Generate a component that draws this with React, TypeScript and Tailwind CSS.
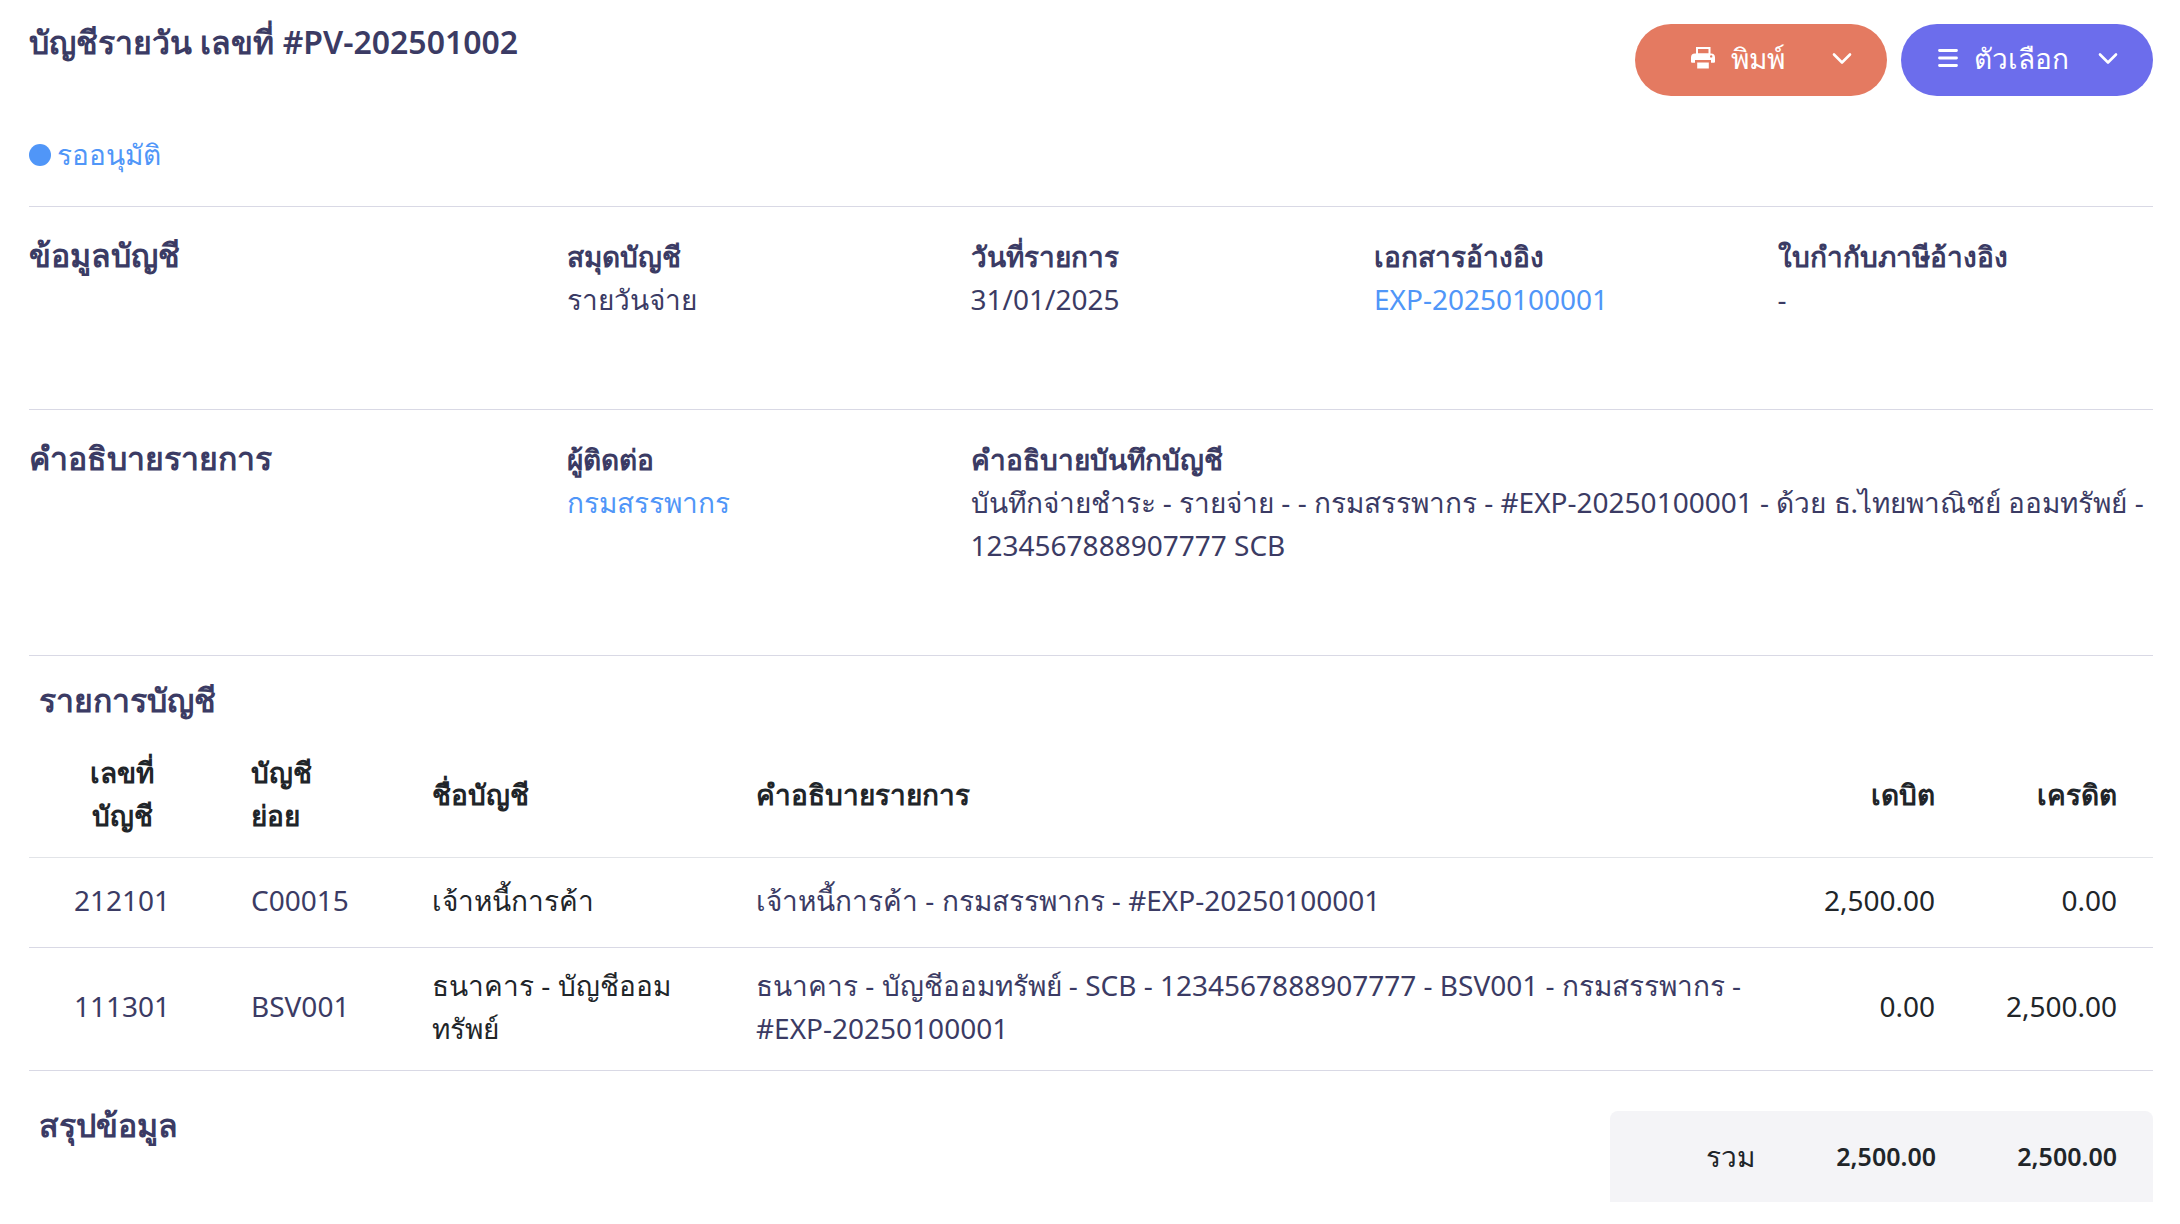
import type { ReactNode } from 'react';

interface Entry {
  account: string;
  sub: string;
  name: string;
  description: string;
  debit: string;
  credit: string;
}

const entries: Entry[] = [
  {
    account: '212101',
    sub: 'C00015',
    name: 'เจ้าหนี้การค้า',
    description: 'เจ้าหนี้การค้า - กรมสรรพากร - #EXP-20250100001',
    debit: '2,500.00',
    credit: '0.00',
  },
  {
    account: '111301',
    sub: 'BSV001',
    name: 'ธนาคาร - บัญชีออมทรัพย์',
    description: 'ธนาคาร - บัญชีออมทรัพย์ - SCB - 1234567888907777 - BSV001 - กรมสรรพากร - #EXP-20250100001',
    debit: '0.00',
    credit: '2,500.00',
  },
];

function ChevronIcon() {
  return (
    <svg width="20" height="14" viewBox="0 0 20 14" fill="none" stroke="currentColor" strokeWidth="2.6" strokeLinecap="round" strokeLinejoin="round">
      <path d="M2 3.5 10 11.5 18 3.5" />
    </svg>
  );
}

function PrinterIcon() {
  return (
    <svg width="24" height="22" viewBox="0 0 24 22" fill="currentColor" fillRule="evenodd">
      <path d="M5 0h14.5v7H5zM7 2v4.5h10.5V2z" />
      <path d="M4 6.5h16a4 4 0 0 1 4 4v4.2a1 1 0 0 1-1 1h-3V13H4v2.7H1a1 1 0 0 1-1-1v-4.2a4 4 0 0 1 4-4zM20.2 8.2a1.2 1.2 0 1 0 0 2.4 1.2 1.2 0 0 0 0-2.4z" />
      <path d="M6.2 15.5h11.6v6H6.2z" />
    </svg>
  );
}

function MenuIcon() {
  return (
    <svg width="20" height="18" viewBox="0 0 20 18" fill="none" stroke="currentColor" strokeWidth="2.8" strokeLinecap="round">
      <path d="M1.5 1.5h17M1.5 9h17M1.5 16.5h17" />
    </svg>
  );
}

function ActionButton({ icon, label, color }: { icon: ReactNode; label: string; color: string }) {
  return (
    <button type="button" className={`flex h-[72px] w-[252px] items-center rounded-full pr-[35px] pb-1 pl-2 text-white ${color}`}>
      <span className="flex flex-1 items-center justify-center gap-4">
        {icon}
        {label}
      </span>
      <ChevronIcon />
    </button>
  );
}

function Field({ label, className = '', children }: { label: string; className?: string; children: ReactNode }) {
  return (
    <div className={className}>
      <dt className="font-semibold">{label}</dt>
      <dd>{children}</dd>
    </div>
  );
}

export default function App() {
  return (
    <main className="bg-white pt-6 pr-[27px] pl-[29px] font-['Noto_Sans',sans-serif] text-[28px] leading-[43px] text-[#3b3b64]">
      <header className="flex items-start justify-between">
        <h1 className="text-[32px] leading-9 font-semibold">บัญชีรายวัน เลขที่ #PV-202501002</h1>
        <div className="flex gap-[14px]">
          <ActionButton icon={<PrinterIcon />} label="พิมพ์" color="bg-[#e47a61]" />
          <ActionButton icon={<MenuIcon />} label="ตัวเลือก" color="bg-[#6c6dec]" />
        </div>
      </header>

      <p className="mt-[37px] flex items-center gap-[6px] pb-[30px] text-[#5096f8]">
        <span className="size-[22px] rounded-full bg-[#5096f8]" />
        รออนุมัติ
      </p>

      <section className="grid min-h-[203px] grid-cols-[538px_minmax(0,1fr)] border-t border-[#d9d9e5] pt-7">
        <h2 className="text-[32px] leading-10 font-semibold">ข้อมูลบัญชี</h2>
        <dl className="-mr-7 grid grid-cols-4">
          <Field label="สมุดบัญชี">รายวันจ่าย</Field>
          <Field label="วันที่รายการ">31/01/2025</Field>
          <Field label="เอกสารอ้างอิง">
            <a href="#expense" className="text-[#5096f8]">EXP-20250100001</a>
          </Field>
          <Field label="ใบกำกับภาษีอ้างอิง">-</Field>
        </dl>
      </section>

      <section className="grid min-h-[246px] grid-cols-[538px_minmax(0,1fr)] border-t border-[#d9d9e5] pt-7">
        <h2 className="text-[32px] leading-10 font-semibold">คำอธิบายรายการ</h2>
        <dl className="-mr-7 grid grid-cols-4">
          <Field label="ผู้ติดต่อ">
            <a href="#contact" className="text-[#5096f8]">กรมสรรพากร</a>
          </Field>
          <Field label="คำอธิบายบันทึกบัญชี" className="col-span-3 pr-4">
            บันทึกจ่ายชำระ - รายจ่าย - - กรมสรรพากร - #EXP-20250100001 - ด้วย ธ.ไทยพาณิชย์ ออมทรัพย์ - 1234567888907777 SCB
          </Field>
        </dl>
      </section>

      <section className="border-t border-[#d9d9e5] pt-6">
        <h2 className="mb-3 pl-[10px] text-[32px] leading-10 font-semibold">รายการบัญชี</h2>
        <table className="w-full table-fixed text-left text-[#212529]">
          <colgroup>
            <col className="w-[186px]" />
            <col className="w-[181px]" />
            <col className="w-[324px]" />
            <col />
            <col className="w-[182px]" />
            <col className="w-[182px]" />
          </colgroup>
          <thead>
            <tr className="h-[125px] border-b border-[#e2e4e8]">
              <th className="px-9 text-center font-semibold">เลขที่<br />บัญชี</th>
              <th className="px-9 font-semibold">บัญชี<br />ย่อย</th>
              <th className="px-9 font-semibold">ชื่อบัญชี</th>
              <th className="px-9 font-semibold">คำอธิบายรายการ</th>
              <th className="px-9 text-right font-semibold">เดบิต</th>
              <th className="px-9 text-right font-semibold">เครดิต</th>
            </tr>
          </thead>
          <tbody>
            {entries.map(entry => (
              <tr key={entry.account} className="h-[90px] border-b border-[#d9d9e5]">
                <td className="pt-4 pb-5 text-center text-[#3b3b64]">{entry.account}</td>
                <td className="px-9 pt-4 pb-5 text-[#3b3b64]">{entry.sub}</td>
                <td className="px-9 pt-4 pb-5">{entry.name}</td>
                <td className="px-9 pt-4 pb-5 text-[#3b3b64]">{entry.description}</td>
                <td className="pt-4 pr-9 pb-5 text-right">{entry.debit}</td>
                <td className="pt-4 pr-9 pb-5 text-right">{entry.credit}</td>
              </tr>
            ))}
          </tbody>
        </table>
      </section>

      <section className="flex items-start justify-between pt-10">
        <h2 className="pl-[10px] text-[32px] leading-7 font-semibold">สรุปข้อมูล</h2>
        <dl className="grid h-[91px] grid-cols-3 items-center rounded-t-lg bg-[#f4f4f7] text-right text-[#212529]">
          <dt className="w-[181px] pr-9">รวม</dt>
          <dd className="w-[181px] pr-9 text-[25px] font-semibold">2,500.00</dd>
          <dd className="w-[181px] pr-9 text-[25px] font-semibold">2,500.00</dd>
        </dl>
      </section>
    </main>
  );
}
